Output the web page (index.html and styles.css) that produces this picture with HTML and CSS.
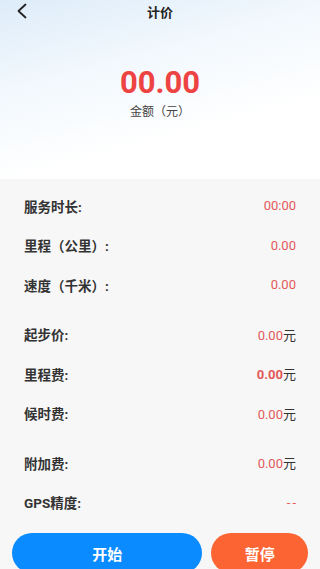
FILE: index.html
```html
<!DOCTYPE html>
<html lang="zh">
<head>
    <meta charset="UTF-8">
    <meta name="viewport" content="width=device-width, initial-scale=1.0">
    <title>计价</title>
    <link rel="stylesheet" href="styles.css">
</head>
<body>
    <div class="top">
        <header class="nav">
            <span class="back">
                <svg width="12" height="16" viewBox="0 0 12 16"><path d="M10.5 1.5 L3.5 8 L10.5 14.5" fill="none" stroke="#222" stroke-width="1.8" stroke-linecap="round" stroke-linejoin="round"/></svg>
            </span>
            <span class="title">计价</span>
        </header>
        <div class="amount">
            <div class="amount-num">00.00</div>
            <div class="amount-label">金额（元）</div>
        </div>
    </div>

    <div class="list">
        <div class="group">
            <div class="row"><span class="label">服务时长:</span><span class="val">00:00</span></div>
            <div class="row"><span class="label">里程（公里）:</span><span class="val">0.00</span></div>
            <div class="row"><span class="label">速度（千米）:</span><span class="val">0.00</span></div>
        </div>
        <div class="group">
            <div class="row"><span class="label">起步价:</span><span class="val">0.00<em>元</em></span></div>
            <div class="row"><span class="label">里程费:</span><span class="val strong">0.00<em>元</em></span></div>
            <div class="row"><span class="label">候时费:</span><span class="val">0.00<em>元</em></span></div>
        </div>
        <div class="group">
            <div class="row"><span class="label">附加费:</span><span class="val">0.00<em>元</em></span></div>
            <div class="row"><span class="label">GPS精度:</span><span class="val dash">--</span></div>
        </div>
        <div class="actions">
            <button class="btn btn-start">开始</button>
            <button class="btn btn-pause">暂停</button>
        </div>
    </div>
</body>
</html>
```

FILE: styles.css
```css
body {
    margin: 0;
    padding: 0;
    font-family: Roboto, "Noto Sans CJK SC", sans-serif;
    color: #333;
    background-color: #f7f7f7;
}
.top {
    height: 179px;
    background: linear-gradient(165deg, #deecf9 0%, #f2f8fd 35%, #ffffff 70%);
}
.nav {
    position: relative;
    height: 22px;
    display: flex;
    justify-content: center;
    align-items: center;
}
.back {
    position: absolute;
    left: 15px;
    top: 3px;
    display: flex;
}
.title {
    font-size: 13px;
    font-weight: bold;
    color: #222;
}
.amount {
    display: flex;
    flex-direction: column;
    align-items: center;
    padding-top: 42px;
}
.amount-num {
    font-size: 31px;
    font-weight: bold;
    color: #ee4343;
    line-height: 38px;
}
.amount-label {
    font-size: 12px;
    color: #444;
    line-height: 16px;
    margin-top: 2px;
}
.list {
    padding-top: 7px;
}
.group {
    margin-bottom: 10px;
}
.row {
    height: 39.5px;
    display: flex;
    justify-content: space-between;
    align-items: center;
    padding: 0 24px;
}
.label {
    font-size: 13.5px;
    font-weight: bold;
    color: #333;
}
.val {
    font-size: 13px;
    color: #e25a5a;
}
.val.strong {
    font-weight: bold;
}
.val.dash {
    letter-spacing: 2px;
    margin-right: -2px;
}
.val em {
    font-style: normal;
    font-weight: normal;
    color: #333;
}
.actions {
    display: flex;
    gap: 9px;
    padding: 1px 12px 0;
}
.btn {
    height: 40px;
    border: none;
    border-radius: 20px;
    color: white;
    font-size: 15px;
    font-weight: bold;
    font-family: Roboto, "Noto Sans CJK SC", sans-serif;
}
.btn-start {
    width: 191px;
    background-color: #0a8bff;
}
.btn-pause {
    width: 97px;
    background-color: #fc6433;
}
```
